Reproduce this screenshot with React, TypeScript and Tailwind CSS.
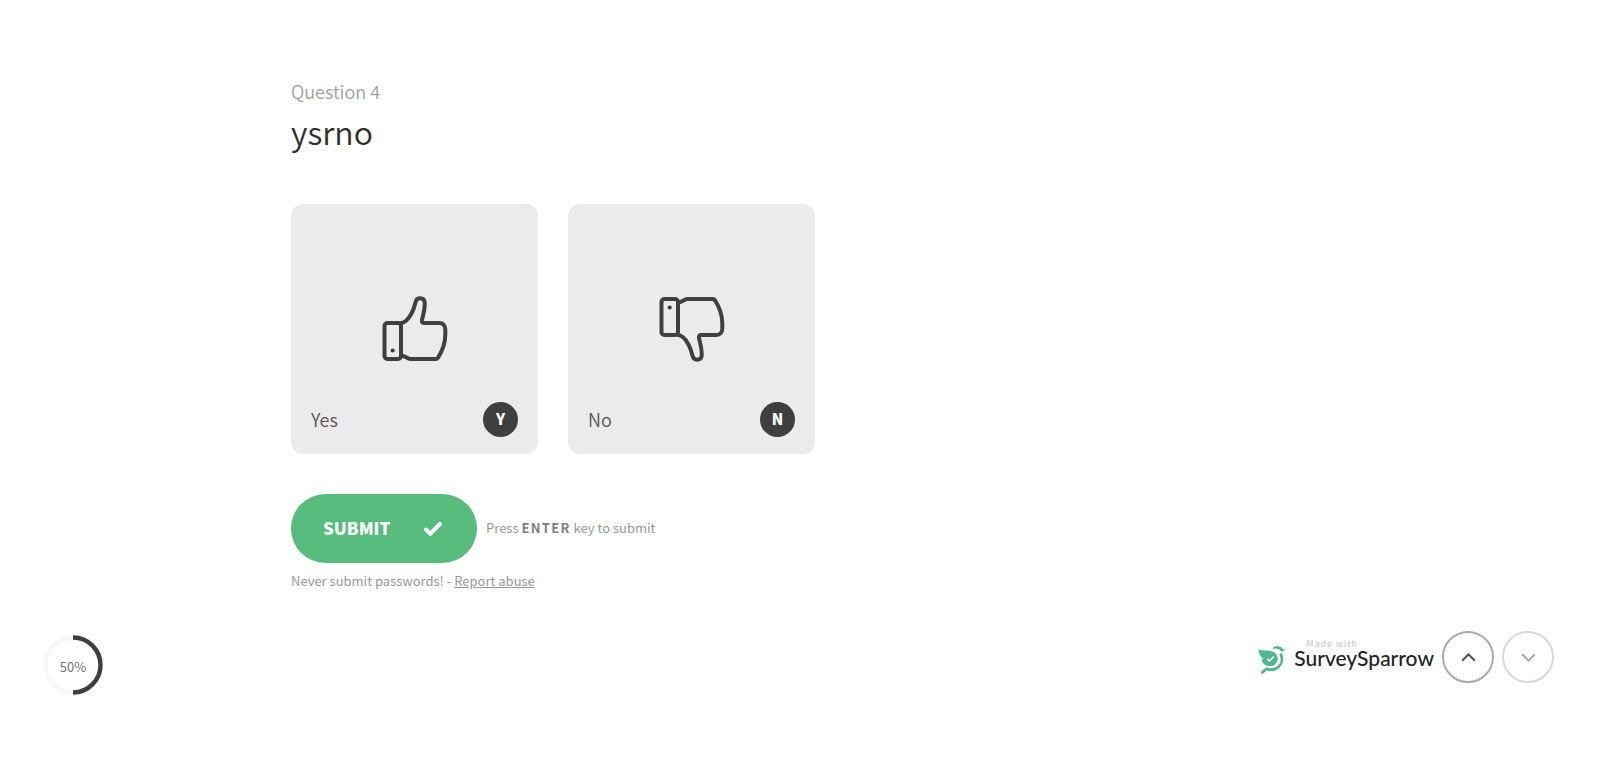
import { useState } from 'react';

interface Choice {
  label: string;
  shortcut: string;
  flipped: boolean;
}

const choices: Choice[] = [
  { label: 'Yes', shortcut: 'Y', flipped: false },
  { label: 'No', shortcut: 'N', flipped: true },
];

function ThumbIcon({ flipped }: { flipped: boolean }) {
  return (
    <svg
      viewBox="0 0 66 66"
      className={flipped ? 'w-[66px] h-[66px] -scale-y-100' : 'w-[66px] h-[66px]'}
      fill="none"
      stroke="#3f3f3f"
      strokeWidth="4"
      strokeLinecap="round"
      strokeLinejoin="round"
      aria-hidden="true"
    >
      <rect x="2.500" y="27" width="16.500" height="36" rx="3" />
      <path d="M19 27c5 0 8-5 10.500-9.500c2.300-4.200 3-7.500 4-11.300c.7-2.700 2.200-3.900 4.400-3.900c3 0 4.900 1.900 4.900 5.200c0 7-2 12.500-2.800 16.500c-.4 2 .3 3 1.800 3h15.500c3.700 0 6 2.600 6 6.500v5c0 9.500-4 18-7.300 23.200c-.6.900-1.200 1.300-2.200 1.300H28.500c-3.500 0-4.500-3-9.500-3.500" />
      <circle cx="10.700" cy="54.500" r="2.100" fill="#3f3f3f" stroke="none" />
    </svg>
  );
}

function ChoiceCard({
  choice,
  selected,
  onSelect,
}: {
  choice: Choice;
  selected: boolean;
  onSelect: () => void;
}) {
  return (
    <button
      type="button"
      aria-pressed={selected}
      onClick={onSelect}
      className="flex flex-col w-[247px] h-[250px] rounded-xl bg-[#ebebeb] px-5 pb-[17px] hover:bg-[#e2e2e2] transition-colors"
    >
      <span className="flex-1 flex items-end justify-center pb-10">
        <ThumbIcon flipped={choice.flipped} />
      </span>
      <span className="w-full flex items-center justify-between">
        <span className="pb-0.5 text-lg font-[350] text-[#555555]">{choice.label}</span>
        <span className="w-[35px] h-[35px] pb-px rounded-full bg-[#3f3f3f] text-white text-[15px] font-black flex items-center justify-center">
          {choice.shortcut}
        </span>
      </span>
    </button>
  );
}

function ProgressRing({ percent }: { percent: number }) {
  return (
    <div className="grid place-items-center mt-1 w-[60px] h-[60px]">
      <svg viewBox="0 0 60 60" className="col-start-1 row-start-1 w-full h-full -rotate-90" fill="none" strokeWidth="4.500" aria-hidden="true">
        <circle cx="30" cy="30" r="27.500" stroke="#f8f8f8" />
        <circle cx="30" cy="30" r="27.500" stroke="#3f3f3f" pathLength="100" strokeDasharray={`${percent} 100`} />
      </svg>
      <span className="col-start-1 row-start-1 pt-1 text-[13px] leading-5 text-[#737373]">{percent}%</span>
    </div>
  );
}

function SparrowLogo() {
  return (
    <svg viewBox="0 0 28 30" className="w-7 h-[30px]" fill="none" aria-hidden="true">
      <path
        d="M.5 4.500c4 1.800 8.300.5 12.500 1.500c5 1.300 7.400 5 6.600 9c-.8 4-4.300 6.400-8.400 6.100C6.800 20.800 4 17.800 3.500 14.200c1 .2 1.500 0 2-.2C2.600 12 .4 8.800.5 4.500Z"
        fill="#53b68c"
      />
      <path d="M9.300 13.800l2.300 2.200l4.300-4.400" stroke="white" strokeWidth="1.500" />
      <path d="M14 3.800C15.500 1.600 18 .7 20.500 1.200c2.400.4 3.700 1.400 4.200 2.600l2.500 1c-1.500.4-2.500 1.200-3.200 2.400c-1.700-2.800-5.500-4.300-10-3.400Z" fill="#53b68c" />
      <path d="M22.500 8.500C25 13.500 24 19 20 22.300C16.500 25 12.300 25.200 8.200 23.900L3.500 28.300" stroke="#53b68c" strokeWidth="2.800" strokeLinejoin="round" />
    </svg>
  );
}

export default function App() {
  const [answer, setAnswer] = useState<string | null>(null);

  return (
    <div className="min-h-screen flex flex-col bg-white font-['Noto_Sans_CJK_SC',sans-serif]">
      <main className="w-full max-w-[1018px] mx-auto pt-[79px]">
        <p className="text-lg leading-6 font-[350] text-[#a0a0a0]">Question 4</p>
        <h1 className="mt-2 text-[32px] leading-10 font-[350] text-[#2f2f2f]">ysrno</h1>

        <div className="mt-[53px] flex flex-wrap gap-[30px]">
          {choices.map((choice) => (
            <ChoiceCard
              key={choice.label}
              choice={choice}
              selected={answer === choice.label}
              onSelect={() => setAnswer(choice.label)}
            />
          ))}
        </div>

        <div className="mt-10 flex items-center gap-[9px]">
          <button
            type="submit"
            className="flex items-center justify-between w-[186px] h-[69px] pl-8 pr-[35px] rounded-full bg-[#56bb7c] text-white text-[17px] font-black hover:bg-[#4aad70] transition-colors"
          >
            <span className="pb-0.5">SUBMIT</span>
            <svg viewBox="0 0 18 14" className="w-[18px] h-[14px]" fill="none" aria-hidden="true">
              <path d="M2 7.500l4.300 4.200L16 2" stroke="white" strokeWidth="4" strokeLinecap="round" />
            </svg>
          </button>
          <p className="pb-0.5 text-[13px] text-[#989898]">
            Press <strong className="font-bold tracking-widest text-[#808080]">ENTER</strong> key to submit
          </p>
        </div>

        <p className="mt-2 text-[13px] leading-5 text-[#989898]">
          Never submit passwords! -{' '}
          <a href="#report" className="underline">
            Report abuse
          </a>
        </p>
      </main>

      <footer className="mt-auto flex items-start justify-between pl-[43px] pr-[46px] pb-[66px]">
        <ProgressRing percent={50} />
        <div className="flex items-center gap-2">
          <a href="#surveysparrow" className="flex items-end gap-2">
            <SparrowLogo />
            <span className="flex flex-col pb-[7px]">
              <span className="pl-3 text-[9px] leading-[9px] tracking-widest text-[#c4c4c4]">Made with</span>
              <span className="font-['Lato',sans-serif] text-[21px] leading-5 font-medium text-[#222222]">SurveySparrow</span>
            </span>
          </a>
          <button
            type="button"
            aria-label="Previous question"
            className="w-[52px] h-[52px] rounded-full border-2 border-[#aaaaaa] flex items-center justify-center"
          >
            <svg viewBox="0 0 16 10" className="w-[15px] h-[9px]" fill="none" aria-hidden="true">
              <path d="M1 8.500l7-7l7 7" stroke="#555555" strokeWidth="2.400" />
            </svg>
          </button>
          <button
            type="button"
            aria-label="Next question"
            className="w-[52px] h-[52px] rounded-full border-2 border-[#d8d8d8] flex items-center justify-center"
          >
            <svg viewBox="0 0 16 10" className="w-[15px] h-[9px]" fill="none" aria-hidden="true">
              <path d="M1 1.500l7 7l7-7" stroke="#aaaaaa" strokeWidth="2.400" />
            </svg>
          </button>
        </div>
      </footer>
    </div>
  );
}
